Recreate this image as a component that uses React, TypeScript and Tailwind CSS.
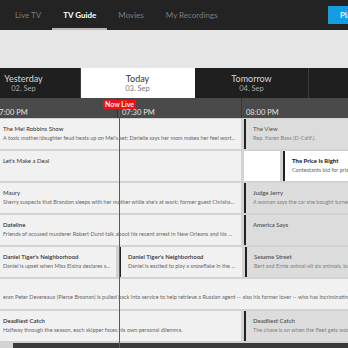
import React from "react";

type Kind = "now" | "next" | "picked" | "blank";

type Show = {
  title?: string;
  desc?: string;
  w?: string;
  kind: Kind;
  edge?: boolean;
  bold?: boolean;
};

const rows: Show[][] = [
  [
    {
      title: "The Mel Robbins Show",
      desc: "A toxic mother/daughter feud heats up on Mel's set; Darielle says her mom makes her feel wort...",
      w: "w-[241px]",
      kind: "now",
    },
    { title: "The View", desc: "Rep. Karen Bass (D-Calif.).", kind: "next", edge: true },
  ],
  [
    { title: "Let's Make a Deal", w: "w-[241px]", kind: "now" },
    { w: "w-[36px]", kind: "blank" },
    {
      title: "The Price Is Right",
      desc: "Contestants bid for prizes to win a showcase.",
      kind: "picked",
      edge: true,
    },
  ],
  [
    {
      title: "Maury",
      desc: "Sherry suspects that Brandon sleeps with her mother while she's at work; former guest Chrisha...",
      w: "w-[241px]",
      kind: "now",
    },
    {
      title: "Judge Jerry",
      desc: "A woman says the car she bought turned out to be a lemon.",
      kind: "next",
      edge: true,
      bold: true,
    },
  ],
  [
    {
      title: "Dateline",
      desc: "Friends of accused murderer Robert Durst talk about his recent arrest in New Orleans and his ...",
      w: "w-[241px]",
      kind: "now",
      bold: true,
    },
    { title: "America Says", kind: "next", edge: true, bold: true },
  ],
  [
    {
      title: "Daniel Tiger's Neighborhood",
      desc: "Daniel is upset when Miss Elaina declares s...",
      w: "w-[116px]",
      kind: "now",
      bold: true,
    },
    {
      title: "Daniel Tiger's Neighborhood",
      desc: "Daniel is excited to play a snowflake in the ...",
      w: "w-[123px]",
      kind: "now",
      edge: true,
      bold: true,
    },
    {
      title: "Sesame Street",
      desc: "Bert and Ernie animal-sit six animals, but one goes missing.",
      kind: "next",
      edge: true,
      bold: true,
    },
  ],
  [
    {
      desc: "eran Peter Devereaux (Pierce Brosnan) is pulled back into service to help retrieve a Russian agent -- also his former lover -- who has incriminating",
      kind: "now",
    },
  ],
  [
    {
      title: "Deadliest Catch",
      desc: "Halfway through the season, each skipper faces his own personal dilemma.",
      w: "w-[241px]",
      kind: "now",
      bold: true,
    },
    {
      title: "Deadliest Catch",
      desc: "The chase is on when the fleet gets worse weather.",
      kind: "next",
      edge: true,
      bold: true,
    },
  ],
];

function Cell({ show }: { show: Show }) {
  const bg =
    show.kind === "next"
      ? "bg-[#dcdcdc]"
      : show.kind === "picked" || show.kind === "blank"
        ? "bg-white"
        : "bg-[#f1f1f1]";
  const titleColor =
    show.kind === "picked"
      ? "text-[#111]"
      : show.kind === "next"
        ? "text-[#555]"
        : "text-[#333]";
  const descColor = show.kind === "next" ? "text-[#808080]" : "text-[#666]";

  return (
    <div
      className={`${show.w ?? "flex-1 min-w-0"} shrink-0 h-full overflow-hidden whitespace-nowrap ${bg} ${
        show.edge ? "border-l-2 border-[#222] pl-[7px]" : "pl-[3px]"
      } ${show.title ? "pt-[5px]" : "pt-[13px] pl-0"}`}
    >
      {show.title && (
        <div
          className={`text-[6px] leading-[9px] ${titleColor} ${
            show.kind === "picked" ? "font-bold" : show.bold ? "font-semibold" : "font-normal"
          }`}
        >
          {show.title}
        </div>
      )}
      {show.desc && (
        <div className={`mt-[1px] text-[5.5px] leading-[9px] ${descColor}`}>{show.desc}</div>
      )}
    </div>
  );
}

export default function App() {
  return (
    <div className="relative w-[348px] h-[348px] overflow-hidden bg-[#e6e6e6] font-['Lato','Noto_Sans',sans-serif]">
      {/* top nav */}
      <div className="flex h-[30px] items-stretch bg-[#232323] pl-[4px]">
        <div className="flex items-center px-[11px] text-[8px] text-[#7d7d7d]">Live TV</div>
        <div className="relative flex items-center px-[11px] text-[8px] font-bold text-white">
          TV Guide
          <div className="absolute bottom-0 left-0 right-0 h-[2px] bg-[#b8b8b8]" />
        </div>
        <div className="flex items-center px-[11px] text-[8px] text-[#7d7d7d]">Movies</div>
        <div className="flex items-center px-[11px] text-[8px] text-[#7d7d7d]">My Recordings</div>
        <div className="ml-auto -mr-[26px] flex h-[18px] w-[46px] shrink-0 items-center self-center bg-[#139ee2] pl-[12px] text-[8px] font-semibold text-white">
          Plans
        </div>
      </div>

      <div className="h-[38px]" />

      {/* day switcher */}
      <div className="-ml-[33px] flex h-[30px] bg-[#1f1f1f]">
        {[
          { d: "Yesterday", s: "02. Sep" },
          { d: "Today", s: "03. Sep", on: true },
          { d: "Tomorrow", s: "04. Sep" },
        ].map((t) => (
          <div
            key={t.d}
            className={`flex w-[114px] shrink-0 flex-col items-center justify-center border-r ${
              t.on ? "border-white bg-white" : "border-[#3c3c3c] bg-[#1f1f1f]"
            }`}
          >
            <div className={`text-[9px] leading-[11px] ${t.on ? "text-[#333]" : "text-[#d6d6d6]"}`}>
              {t.d}
            </div>
            <div className={`text-[7.5px] leading-[9px] ${t.on ? "text-[#777]" : "text-[#a8a8a8]"}`}>
              {t.s}
            </div>
          </div>
        ))}
      </div>

      {/* time ruler */}
      <div className="-ml-[10px] flex h-[20px] bg-[#4a4a4a]">
        {[
          { t: "07:00 PM", w: "w-[127px]" },
          { t: "07:30 PM", w: "w-[124px]" },
          { t: "08:00 PM", w: "w-[124px]" },
        ].map((s) => (
          <div
            key={s.t}
            className={`flex ${s.w} shrink-0 items-end border-l border-[#363636] pb-[1px] pl-[4px] text-[7.5px] leading-[9px] text-[#e2e2e2]`}
          >
            {s.t}
          </div>
        ))}
      </div>

      {/* grid */}
      <div className="flex flex-col gap-[2px] bg-[#d3d3d3] pt-[1px]">
        {rows.map((r, i) => (
          <div key={i} className="flex h-[30px] gap-[3px]">
            {r.map((s, j) => (
              <Cell key={j} show={s} />
            ))}
          </div>
        ))}
        <div className="flex h-[5px]">
          <div className="w-[13px] bg-[#d3d3d3]" />
          <div className="flex-1 bg-[#3a3a3a]" />
        </div>
      </div>

      {/* now marker */}
      <div className="absolute left-[119px] top-[108px] bottom-0 w-px bg-[#d3262c]" />
      <div className="absolute left-[103px] top-[100px] flex h-[9px] w-[33px] items-center justify-center bg-[#ee1118] text-[7px] font-semibold leading-[9px] text-white">
        Now Live
      </div>
    </div>
  );
}
